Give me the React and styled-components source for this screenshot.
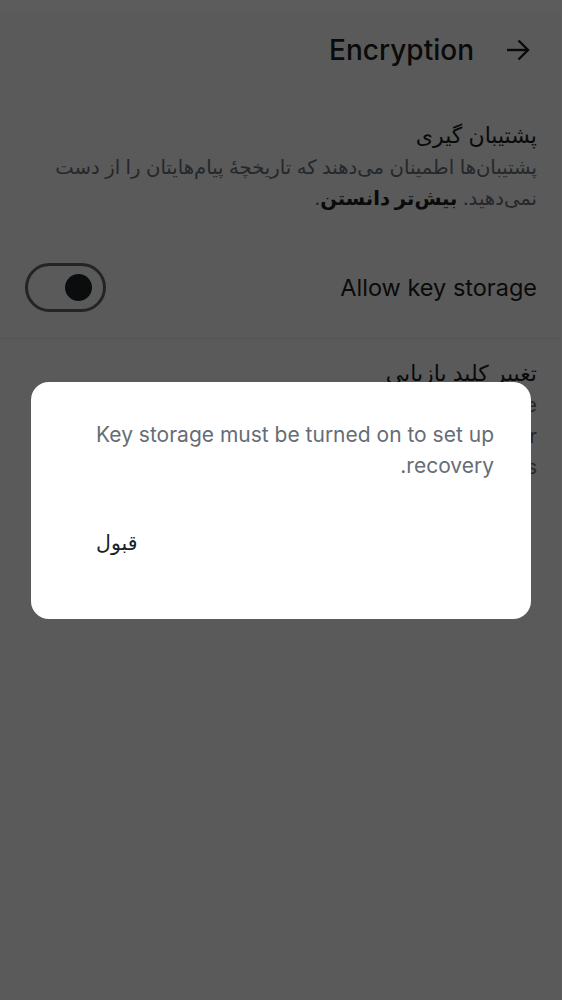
import React from 'react'
import styled, { createGlobalStyle } from 'styled-components'

const GlobalStyle = createGlobalStyle`
  html, body {
    margin: 0;
    padding: 0;
    background: #ffffff;
  }
  body {
    font-family: Inter, 'DejaVu Sans', sans-serif;
    color: #1b1d22;
  }
`

const Page = styled.div`
  direction: rtl;
  min-height: 1000px;
  padding: 12px 24px 0;
  box-sizing: border-box;
`

const Panel = styled.div`
  background: #f8f8f8;
  min-height: 988px;
  margin: 0 -24px;
  padding: 0 25px;
`

const Header = styled.div`
  display: flex;
  align-items: center;
  gap: 32px;
  padding: 11px 7px 0 0;
  height: 54px;
`

const Title = styled.h1`
  margin: 0;
  font-size: 28px;
  font-weight: 500;
  color: #1b1d22;
`

const Section = styled.div`
  padding-top: 43px;
`

const SectionTitle = styled.div`
  font-size: 22px;
  line-height: 30px;
  color: #1b1d22;
`

const Description = styled.p`
  margin: 2px 0 0;
  font-size: 19.6px;
  line-height: 31px;
  color: #656d77;
  b {
    color: #1b1d22;
    font-weight: 600;
  }
`

const Line = styled.span`
  display: block;
  white-space: nowrap;
`

const ToggleRow = styled.div`
  display: flex;
  align-items: center;
  justify-content: space-between;
  height: 50px;
  margin-top: 48px;
`

const ToggleLabel = styled.span`
  font-size: 23.5px;
  color: #1b1d22;
`

const Switch = styled.div`
  width: 81px;
  height: 49px;
  box-sizing: border-box;
  border: 3px solid #5f666f;
  border-radius: 25px;
  display: flex;
  align-items: center;
  padding: 0 11px;
`

const Knob = styled.span`
  width: 27px;
  height: 27px;
  border-radius: 50%;
  background: #1f2226;
  margin-left: -2px;
`

const Divider = styled.div`
  height: 1px;
  background: #e3e5e8;
  margin: 26px -25px 0;
`

const SubSection = styled.div`
  padding-top: 19px;
`

const Overlay = styled.div`
  position: fixed;
  inset: 0;
  background: rgba(0, 0, 0, 0.64);
  display: flex;
  align-items: center;
  justify-content: center;
  direction: rtl;
`

const Dialog = styled.div`
  width: calc(100% - 62px);
  height: 237px;
  box-sizing: border-box;
  background: #ffffff;
  border-radius: 18px;
  padding: 37px 37px 0 37px;
  display: flex;
  flex-direction: column;
`

const DialogText = styled.p`
  margin: 0;
  font-size: 21px;
  line-height: 31px;
  color: #656d77;
`

const Actions = styled.div`
  display: flex;
  justify-content: flex-end;
  margin-top: 41px;
`

const TextButton = styled.button`
  background: none;
  border: none;
  font-family: inherit;
  font-size: 20.5px;
  color: #1b1d22;
  padding: 8px 28px;
  cursor: pointer;
`

const BackArrow = () => (
  <svg width="24" height="24" viewBox="0 0 24 24" fill="none" stroke="#1b1d22" strokeWidth="2.4" strokeLinecap="butt">
    <path d="M1 12h21" />
    <path d="M12.5 2.5l9.5 9.5-9.5 9.5" />
  </svg>
)

export default function App() {
  return (
    <>
      <GlobalStyle />
      <Page>
        <Panel>
          <Header>
            <BackArrow />
            <Title>Encryption</Title>
          </Header>
          <Section>
            <SectionTitle>پشتیبان گیری</SectionTitle>
            <Description>
              پشتیبان‌ها اطمینان می‌دهند که تاریخچهٔ پیام‌هایتان را از دست
              نمی‌دهید. <b>بیش‌تر دانستن</b>.
            </Description>
          </Section>
          <ToggleRow>
            <ToggleLabel>Allow key storage</ToggleLabel>
            <Switch>
              <Knob />
            </Switch>
          </ToggleRow>
          <Divider />
          <SubSection>
            <SectionTitle>تغییر کلید بازیابی</SectionTitle>
            <Description>
              <Line>Restore your history if you lose a device</Line>
              <Line>Keep it in a password manager</Line>
              <Line>or with your documents</Line>
            </Description>
          </SubSection>
        </Panel>
      </Page>
      <Overlay>
        <Dialog>
          <DialogText>Key storage must be turned on to set up recovery.</DialogText>
          <Actions>
            <TextButton>قبول</TextButton>
          </Actions>
        </Dialog>
      </Overlay>
    </>
  )
}
